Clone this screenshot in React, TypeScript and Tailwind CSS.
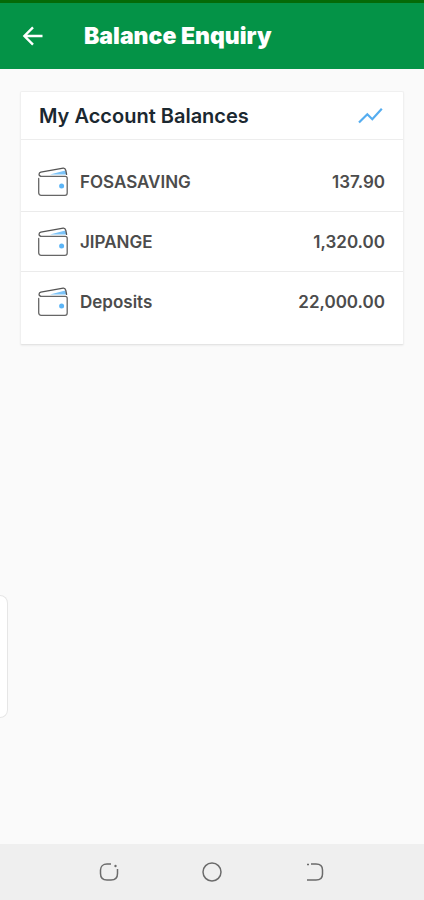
import React from "react";

interface Account {
  name: string;
  balance: string;
}

const accounts: Account[] = [
  { name: "FOSASAVING", balance: "137.90" },
  { name: "JIPANGE", balance: "1,320.00" },
  { name: "Deposits", balance: "22,000.00" },
];

function BackIcon() {
  return (
    <svg viewBox="0 0 24 24" className="w-6 h-6" fill="none" stroke="currentColor" strokeWidth="2.4" aria-hidden="true">
      <path d="M22.5 12H4.8M13 3.4L4.4 12l8.6 8.6" />
    </svg>
  );
}

function TrendIcon() {
  return (
    <svg viewBox="0 0 26 20" className="w-[26px] h-5" fill="none" stroke="#55adf0" strokeWidth="2.2" aria-hidden="true">
      <path d="M2 16.5L10.300 8.200l5 5L24.800 2.800" />
    </svg>
  );
}

function WalletIcon() {
  return (
    <svg viewBox="0 0 32 32" className="w-8 h-8 shrink-0" fill="none" strokeLinecap="round" strokeLinejoin="round" aria-hidden="true">
      <path d="M13 8.600L28.200 4.600l1.400 4z" fill="#7cc3f7" />
      <path d="M3.500 10.200C1.400 9.600 1.600 7 3.800 6.200L26.200 2.200c1.600-.2 2.200.6 2.600 2.200l.8 4" stroke="#555555" strokeWidth="1.300" />
      <path d="M3.500 10.400h24.800c1.200 0 1.900.7 1.900 1.900v14.800c0 1.400-.8 2.200-2.200 2.200H4.200c-1.600 0-2.500-.9-2.500-2.500V12.500" stroke="#666666" strokeWidth="1.300" />
      <circle cx="24.600" cy="20" r="2.500" fill="#5bb5f7" />
    </svg>
  );
}

function RecentsIcon() {
  return (
    <svg viewBox="0 0 20 20" className="w-5 h-5" fill="none" stroke="#6b6b6b" strokeWidth="1.5" aria-hidden="true">
      <path d="M12 2H8C4 2 1.500 4.500 1.500 8v3.500c0 4 2.500 6.500 6.500 6.500h4c4 0 6.500-2.500 6.500-6.500V7" />
      <circle cx="16.500" cy="4" r="1.200" fill="#6b6b6b" stroke="none" />
    </svg>
  );
}

function HomeIcon() {
  return (
    <svg viewBox="0 0 20 20" className="w-5 h-5" fill="none" stroke="#6b6b6b" strokeWidth="1.5" aria-hidden="true">
      <circle cx="10" cy="10" r="9" />
    </svg>
  );
}

function NavBackIcon() {
  return (
    <svg viewBox="0 0 20 20" className="w-5 h-5" fill="none" stroke="#6b6b6b" strokeWidth="1.5" aria-hidden="true">
      <path d="M6 2h5c4.500 0 6.500 2 6.500 6v4c0 4-2 6-6.500 6H2" />
      <path d="M2 2.500h2" />
    </svg>
  );
}

export default function App() {
  return (
    <div className="relative min-h-screen flex flex-col bg-[#fafafa] font-['Inter',sans-serif]">
      {/* App bar */}
      <header className="flex items-center h-[69px] px-5 gap-10 bg-[#049347] border-t-3 border-[#056a08] text-white">
        <button type="button" aria-label="Back" className="cursor-pointer">
          <BackIcon />
        </button>
        <h1 className="text-[23px] leading-7 font-black">Balance Enquiry</h1>
      </header>

      <main className="flex-1 px-5 pt-[22px]">
        {/* Balances card */}
        <section className="bg-white rounded-xs border border-[#f0f0f0] border-b-[#e4e4e4] shadow-xs">
          <div className="flex items-center justify-between h-12 pl-[18px] pr-5 border-b border-[#ededed]">
            <h2 className="text-[20px] leading-7 font-semibold text-[#1b2830]">My Account Balances</h2>
            <button type="button" aria-label="Show trend" className="cursor-pointer">
              <TrendIcon />
            </button>
          </div>
          <ul className="py-3 divide-y divide-[#ebebeb]">
            {accounts.map((account) => (
              <li key={account.name} className="flex items-center h-[60px] pl-4 pr-[18px] gap-[11px]">
                <WalletIcon />
                <span className="flex-1 text-[17px] leading-6 font-semibold text-[#4c4c4c]">{account.name}</span>
                <span className="text-[17px] leading-6 font-semibold text-[#4c4c4c]">{account.balance}</span>
              </li>
            ))}
          </ul>
        </section>
      </main>

      {/* Edge panel handle */}
      <div className="absolute left-0 bottom-[182px] w-2 h-[123px] bg-white rounded-r-lg border border-l-0 border-[#e6e6e6]" />

      {/* System navigation */}
      <nav className="grid grid-cols-3 items-center justify-items-center h-14 px-[58px] bg-[#efefef]">
        <button type="button" aria-label="Recent apps" className="cursor-pointer">
          <RecentsIcon />
        </button>
        <button type="button" aria-label="Home" className="cursor-pointer">
          <HomeIcon />
        </button>
        <button type="button" aria-label="Go back" className="cursor-pointer">
          <NavBackIcon />
        </button>
      </nav>
    </div>
  );
}
